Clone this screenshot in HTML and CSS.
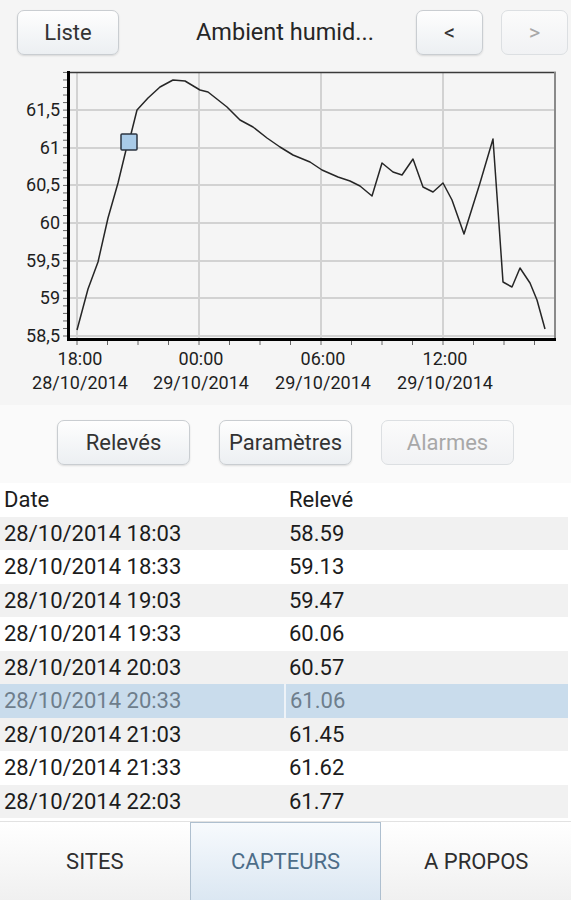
FILE: index.html
```html
<!DOCTYPE html>
<html lang="fr">
<head>
    <meta charset="UTF-8">
    <meta name="viewport" content="width=device-width, initial-scale=1.0">
    <title>Capteurs</title>
    <link rel="stylesheet" href="styles.css">
</head>
<body>
    <div class="top-bar">
        <button class="btn btn-list">Liste</button>
        <span class="sensor-title">Ambient humid...</span>
        <button class="btn btn-nav">&lt;</button>
        <button class="btn btn-nav" disabled>&gt;</button>
    </div>

    <div class="chart">
        <svg width="571" height="343" viewBox="0 62 571 343">
            <!-- grid -->
            <g class="grid">
                <line x1="68" y1="110" x2="555" y2="110"/>
                <line x1="68" y1="148" x2="555" y2="148"/>
                <line x1="68" y1="185" x2="555" y2="185"/>
                <line x1="68" y1="223" x2="555" y2="223"/>
                <line x1="68" y1="261" x2="555" y2="261"/>
                <line x1="68" y1="298" x2="555" y2="298"/>
                <line x1="68" y1="336" x2="555" y2="336"/>
                <line x1="77" y1="72" x2="77" y2="339"/>
                <line x1="199" y1="72" x2="199" y2="339"/>
                <line x1="321" y1="72" x2="321" y2="339"/>
                <line x1="443" y1="72" x2="443" y2="339"/>
            </g>
            <g class="ticks" id="yticks"></g>
            <g class="ticks" id="xticks"></g>
            <line class="frame-top" x1="67" y1="72.5" x2="556" y2="72.5"/>
            <line class="frame-right" x1="555" y1="72" x2="555" y2="339"/>
            <line class="axis" x1="68.5" y1="71" x2="68.5" y2="341"/>
            <line class="axis" x1="67" y1="339.5" x2="556" y2="339.5"/>

            <g class="y-labels">
                <text x="60" y="116">61,5</text>
                <text x="60" y="154">61</text>
                <text x="60" y="191">60,5</text>
                <text x="60" y="229">60</text>
                <text x="60" y="267">59,5</text>
                <text x="60" y="304">59</text>
                <text x="60" y="342">58,5</text>
            </g>
            <g class="x-labels">
                <text x="80" y="365">18:00</text>
                <text x="80" y="389">28/10/2014</text>
                <text x="201" y="365">00:00</text>
                <text x="201" y="389">29/10/2014</text>
                <text x="323" y="365">06:00</text>
                <text x="323" y="389">29/10/2014</text>
                <text x="445" y="365">12:00</text>
                <text x="445" y="389">29/10/2014</text>
            </g>

            <polyline class="series" points="77,330 88,289 98,262 108,218 118,183 126,150 129,142 137,110 148,98 160,87 173,80 185,81 200,90 208,92 227,107 240,120 253,127 267,138 280,147 293,155 310,162 322,170 338,177 350,181 360,186 372,196 382,163 393,172 402,175 413,159 423,187 433,192 443,183 452,200 464,234 480,183 493,139 498,210 503,282 512,287 520,268 530,283 537,300 545,329"/>
            <rect class="marker" x="121" y="134" width="16" height="16" rx="1"/>
        </svg>
    </div>

    <div class="actions">
        <button class="btn btn-action">Relevés</button>
        <button class="btn btn-action">Paramètres</button>
        <button class="btn btn-action" disabled>Alarmes</button>
    </div>

    <table class="readings">
        <thead>
            <tr><th>Date</th><th>Relevé</th></tr>
        </thead>
        <tbody>
            <tr><td>28/10/2014 18:03</td><td>58.59</td></tr>
            <tr><td>28/10/2014 18:33</td><td>59.13</td></tr>
            <tr><td>28/10/2014 19:03</td><td>59.47</td></tr>
            <tr><td>28/10/2014 19:33</td><td>60.06</td></tr>
            <tr><td>28/10/2014 20:03</td><td>60.57</td></tr>
            <tr class="selected"><td>28/10/2014 20:33</td><td>61.06</td></tr>
            <tr><td>28/10/2014 21:03</td><td>61.45</td></tr>
            <tr><td>28/10/2014 21:33</td><td>61.62</td></tr>
            <tr><td>28/10/2014 22:03</td><td>61.77</td></tr>
        </tbody>
    </table>

    <nav class="tabs">
        <div class="tab">SITES</div>
        <div class="tab active">CAPTEURS</div>
        <div class="tab">A PROPOS</div>
    </nav>

    <script>
        // minor ticks on both axes
        const ns = 'http://www.w3.org/2000/svg';
        const yticks = document.getElementById('yticks');
        for (let v = 58.5; v <= 62.01; v += 0.1) {
            const y = 336 - (v - 58.5) * 75.3;
            const line = document.createElementNS(ns, 'line');
            line.setAttribute('x1', 63);
            line.setAttribute('x2', 67);
            line.setAttribute('y1', y);
            line.setAttribute('y2', y);
            yticks.appendChild(line);
        }
        const xticks = document.getElementById('xticks');
        for (let x = 77; x < 556; x += 30.5) {
            const line = document.createElementNS(ns, 'line');
            line.setAttribute('x1', x);
            line.setAttribute('x2', x);
            line.setAttribute('y1', 341);
            line.setAttribute('y2', 345);
            xticks.appendChild(line);
        }
    </script>
</body>
</html>
```

FILE: styles.css
```css
body {
    font-family: Roboto, "Liberation Sans", sans-serif;
    margin: 0;
    padding: 0;
    width: 571px;
    height: 900px;
    overflow: hidden;
    background-color: #ffffff;
    color: #1a1a1a;
    display: flex;
    flex-direction: column;
}

.btn {
    font-family: inherit;
    font-size: 22px;
    color: #333;
    background: linear-gradient(#fefefe, #eceff2);
    border: 1px solid #c9cdd1;
    border-radius: 7px;
    box-shadow: 0 1px 2px rgba(0, 0, 0, 0.12);
    height: 45px;
    padding: 0;
    cursor: pointer;
}

.btn[disabled] {
    color: #a8a8a8;
    background: linear-gradient(#fbfbfb, #f1f2f4);
    border-color: #dcdfe2;
    box-shadow: none;
}

.top-bar {
    height: 62px;
    box-sizing: border-box;
    padding: 10px 3px 0 17px;
    display: flex;
    align-items: flex-start;
    background-color: #f5f5f5;
}

.btn-list {
    width: 102px;
}

.sensor-title {
    flex: 1;
    padding-left: 77px;
    line-height: 45px;
    font-size: 23.5px;
    color: #262626;
}

.btn-nav {
    width: 67px;
    margin-left: 18px;
}

.chart {
    height: 343px;
    background-color: #f5f5f5;
}

.chart svg {
    display: block;
}

.grid line {
    stroke: #d2d2d2;
    stroke-width: 2;
}

.ticks line {
    stroke: #666;
    stroke-width: 1;
}

.frame-top {
    stroke: #3a3a3a;
    stroke-width: 1.5;
}

.frame-right {
    stroke: #8a8a8a;
    stroke-width: 2;
}

.axis {
    stroke: #000;
    stroke-width: 3;
}

.y-labels text,
.x-labels text {
    font-family: Roboto, "Liberation Sans", sans-serif;
    font-size: 18px;
    fill: #1e1e1e;
}

.y-labels text {
    text-anchor: end;
}

.x-labels text {
    text-anchor: middle;
}

.series {
    fill: none;
    stroke: #262626;
    stroke-width: 1.5;
    stroke-linejoin: round;
}

.marker {
    fill: #a9cbe8;
    stroke: #2b3440;
    stroke-width: 1.5;
}

.actions {
    height: 78px;
    box-sizing: border-box;
    padding-top: 15px;
    display: flex;
    justify-content: center;
    gap: 29px;
    background-color: #fafafa;
}

.btn-action {
    width: 133px;
}

.readings {
    width: 568px;
    border-collapse: collapse;
    font-size: 22px;
}

.readings th,
.readings td {
    height: 33.5px;
    padding: 0 0 0 4px;
    text-align: left;
    font-weight: normal;
    color: #1c1c1c;
}

.readings th:first-child,
.readings td:first-child {
    width: 280px;
}

.readings tbody tr:nth-child(odd) {
    background-color: #f1f1f1;
}

.readings tr.selected td {
    background-color: #c9dcec;
    color: #6e7e8c;
    border-right: 2px solid #eef3f8;
}

.readings tr.selected td:last-child {
    border-right: none;
}

.tabs {
    margin-top: auto;
    height: 78px;
    display: flex;
    border-top: 1px solid #e2e2e2;
}

.tab {
    flex: 1;
    display: flex;
    align-items: center;
    justify-content: center;
    font-size: 22px;
    color: #2e2e2e;
    background: linear-gradient(#ffffff, #f0f0f0);
}

.tab.active {
    color: #4d6d88;
    background: linear-gradient(#f7fafd, #dbe7f2);
    border: 1px solid #aebfcf;
    border-bottom: none;
}
```
